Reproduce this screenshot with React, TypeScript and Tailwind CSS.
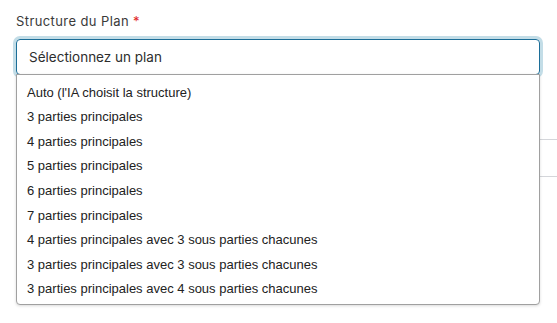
import React from "react";

const options = [
  "Auto (l'IA choisit la structure)",
  "3 parties principales",
  "4 parties principales",
  "5 parties principales",
  "6 parties principales",
  "7 parties principales",
  "4 parties principales avec 3 sous parties chacunes",
  "3 parties principales avec 3 sous parties chacunes",
  "3 parties principales avec 4 sous parties chacunes",
];

export default function App() {
  return (
    <div className="relative w-[557px] h-[323px] overflow-hidden bg-white font-['Inter','Noto_Sans',sans-serif]">
      <div className="pl-4 pt-[12px]">
        <label className="block text-[13px] leading-[18px] tracking-[0.4px] text-[#3a3a3a]">
          Structure du Plan <span className="text-[#e02424]">*</span>
        </label>

        <div className="relative mt-[9px] w-[524px]">
          {/* select trigger, focused */}
          <div className="flex h-[36px] items-center rounded-[4px] border border-[#1c6e98] px-3 text-[13.5px] text-[#2d2d2d] ring-[3px] ring-[#c3dde7]">
            Sélectionnez un plan
          </div>

          {/* open list */}
          <ul className="absolute left-0 top-[35px] z-10 w-full rounded-b-[4px] border border-[#a0a0a0] bg-white pt-[5px] pb-[3px] font-['Liberation_Sans',Arial,sans-serif] text-[13px] text-[#222] shadow-[0_1px_3px_rgba(0,0,0,0.15)]">
            {options.map((opt) => (
              <li key={opt} className="flex h-[24.6px] items-center px-[10px]">
                {opt}
              </li>
            ))}
          </ul>
        </div>

        {/* next fields, mostly hidden under the list */}
        <div className="mt-[64px] h-[38px] border-y border-[#d4d6da]" />
      </div>
    </div>
  );
}
